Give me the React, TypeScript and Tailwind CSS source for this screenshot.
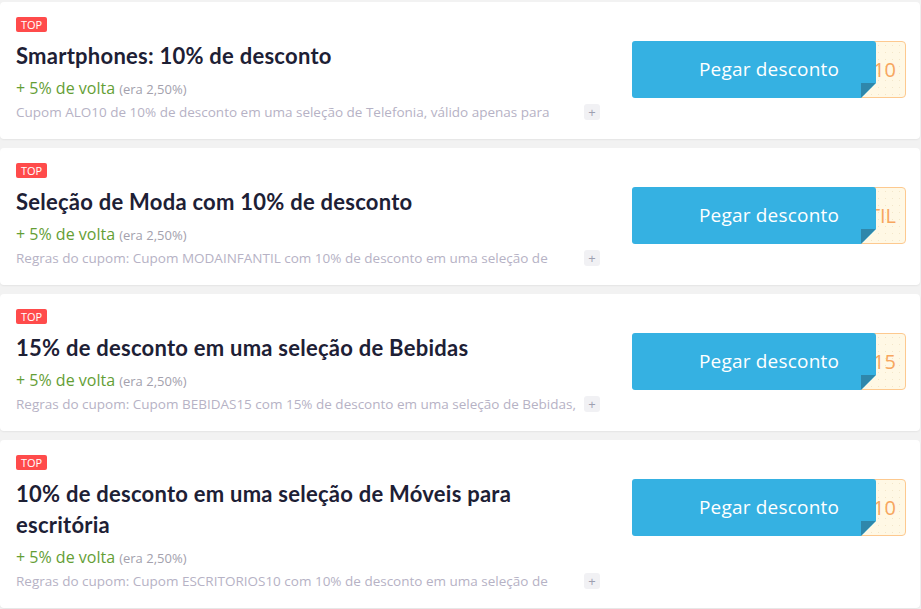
import React from "react";

type Coupon = {
  title: string;
  desc: string;
  code: string;
};

const coupons: Coupon[] = [
  {
    title: "Smartphones: 10% de desconto",
    desc: "Cupom ALO10 de 10% de desconto em uma seleção de Telefonia, válido apenas para compras realizadas no site e no aplicativo.",
    code: "ALO10",
  },
  {
    title: "Seleção de Moda com 10% de desconto",
    desc: "Regras do cupom: Cupom MODAINFANTIL com 10% de desconto em uma seleção de produtos de moda infantil.",
    code: "MODAINFANTIL",
  },
  {
    title: "15% de desconto em uma seleção de Bebidas",
    desc: "Regras do cupom: Cupom BEBIDAS15 com 15% de desconto em uma seleção de Bebidas, válido por tempo limitado.",
    code: "BEBIDAS15",
  },
  {
    title: "10% de desconto em uma seleção de Móveis para escritória",
    desc: "Regras do cupom: Cupom ESCRITORIOS10 com 10% de desconto em uma seleção de móveis para escritório.",
    code: "ESCRITORIOS10",
  },
];

function Card({ c }: { c: Coupon }) {
  return (
    <div className="flex bg-white rounded-[4px] shadow-[0_1px_2px_rgba(0,0,0,0.06)] mr-[1px]">
      <div className="flex-1 min-w-0 pl-4 pt-[15px] pb-[18px]">
        <div className="w-[31px] h-[15px] bg-[#ff4b4b] rounded-[2px] flex items-center justify-center text-white text-[11px] leading-none font-['Open_Sans',sans-serif]">
          TOP
        </div>
        <div className="mt-[8px] w-[540px] text-[22px] leading-[31px] font-bold text-[#1d2035] font-['Lato',sans-serif] tracking-[0.25px]">
          {c.title}
        </div>
        <div className="mt-[8px] h-[18px] leading-[18px] font-['Open_Sans',sans-serif] whitespace-nowrap">
          <span className="text-[16px] text-[#649e35]">+ 5% de volta</span>{" "}
          <span className="text-[13px] text-[#a3a1ad]">(era 2,50%)</span>
        </div>
        <div className="mt-[6px] flex items-center gap-[4px]">
          <div className="w-[564px] h-[18px] overflow-hidden text-[13.5px] leading-[18px] text-[#b6b2c5] font-['Open_Sans',sans-serif]">
            {c.desc}
          </div>
          <div className="w-[16px] h-[16px] rounded-[3px] bg-[#f1f1f4] flex items-center justify-center text-[#9ea0b0] text-[13px] leading-none font-['Open_Sans',sans-serif]">
            +
          </div>
        </div>
      </div>
      <div className="w-[288px] shrink-0 pt-[39px] pr-[14px]">
        <div className="relative w-[274px] h-[57px]">
          <div className="absolute right-0 top-0 h-full w-[60px] rounded-[4px] border border-[#fdc98f] bg-[#fff8e5] bg-[radial-gradient(#f3e6c9_0.6px,transparent_0.8px)] bg-[length:7px_7px] overflow-hidden flex items-center justify-end pr-[9px] text-[20px] text-[#f7a65e] font-['Open_Sans',sans-serif] whitespace-nowrap">
            {c.code}
          </div>
          <div className="absolute left-0 top-0 h-full w-[244px] rounded-[3px] bg-[#35b1e2] [clip-path:polygon(0_0,100%_0,100%_calc(100%-15px),calc(100%-15px)_100%,0_100%)]">
            <div className="absolute right-0 bottom-0 w-[15px] h-[15px] bg-[#2f87ab] [clip-path:polygon(0_0,100%_0,0_100%)]" />
          </div>
          <div className="absolute inset-0 flex items-center justify-center text-white text-[19px] tracking-[0.2px] font-['Open_Sans',sans-serif] pb-[1px]">
            <span className="relative">Pegar desconto</span>
          </div>
        </div>
      </div>
    </div>
  );
}

export default function App() {
  return (
    <div className="w-[921px] h-[609px] overflow-hidden bg-[#f2f2f2] pt-[2px] flex flex-col gap-[9px]">
      {coupons.map((c, i) => (
        <Card key={i} c={c} />
      ))}
    </div>
  );
}
